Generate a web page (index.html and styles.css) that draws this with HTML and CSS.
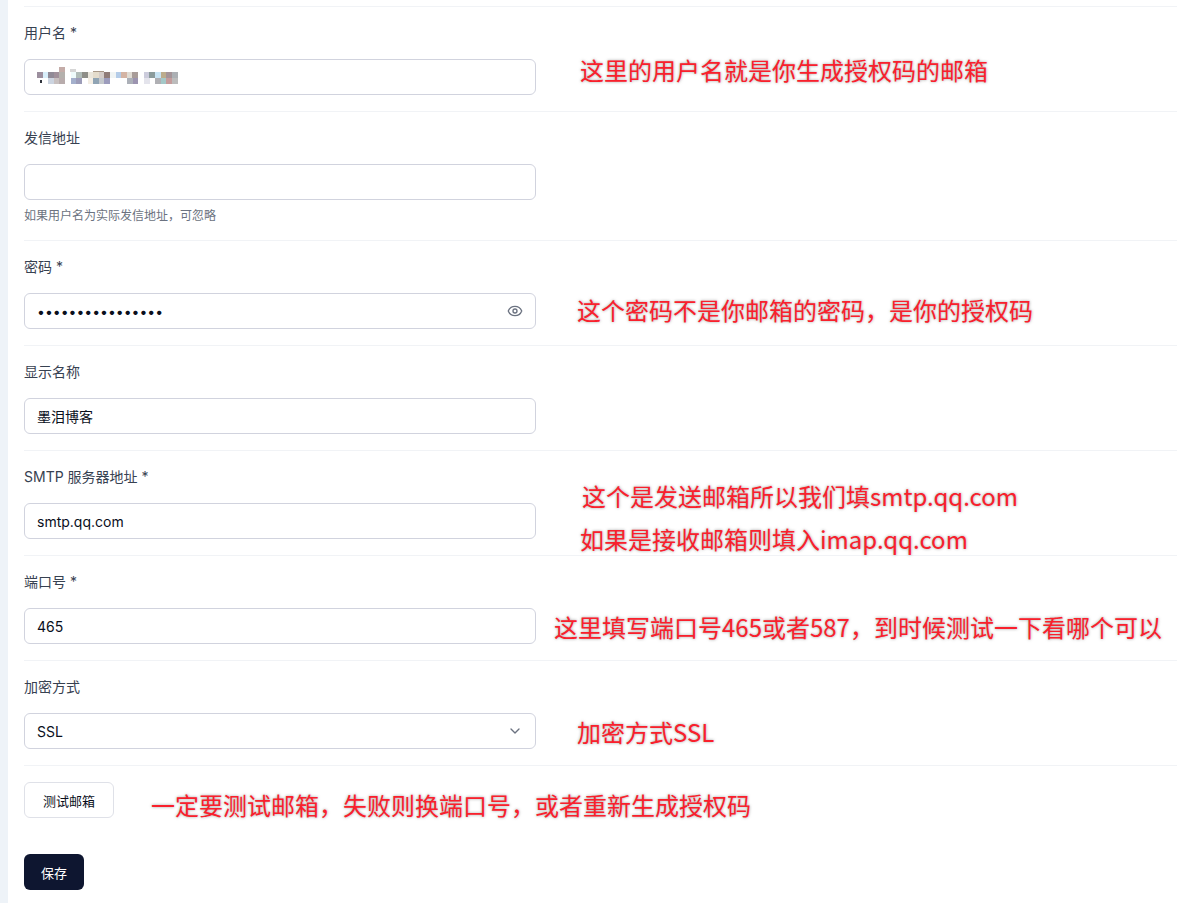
FILE: index.html
```html
<!DOCTYPE html>
<html lang="zh-CN">
<head>
<meta charset="utf-8">
<title>邮箱设置</title>
<link rel="stylesheet" href="styles.css">
</head>
<body>
<main class="panel">
  <form class="form">
    <div class="row">
      <label class="label">用户名 *</label>
      <div class="control">
        <input class="input" type="text" value="">
        <svg class="mosaic" width="150" height="20" viewBox="0 0 150 20" aria-hidden="true">
          <rect x="22" y="0" width="6" height="5" fill="#c4aca8"/><rect x="33" y="2" width="6" height="3" fill="#d6d6d6"/>
          <rect x="56" y="4" width="11" height="1" fill="#a89888"/>
          <rect x="0" y="5" width="6" height="6" fill="#9c8f9e"/><rect x="6" y="5" width="6" height="6" fill="#d8eefa"/><rect x="11" y="5" width="6" height="6" fill="#908a96"/><rect x="17" y="5" width="6" height="6" fill="#a0909a"/><rect x="22" y="5" width="6" height="6" fill="#b4b0ac"/>
          <rect x="34" y="5" width="6" height="6" fill="#eefbfb"/><rect x="39" y="5" width="6" height="6" fill="#b0bcb8"/><rect x="45" y="5" width="6" height="6" fill="#8e8e88"/><rect x="51" y="5" width="6" height="6" fill="#eae6dc"/><rect x="56" y="5" width="6" height="6" fill="#e4dccc"/><rect x="62" y="5" width="6" height="6" fill="#d4ccc8"/><rect x="67" y="5" width="6" height="6" fill="#907c78"/><rect x="73" y="5" width="6" height="6" fill="#f0f4f4"/><rect x="79" y="5" width="6" height="6" fill="#b4cce8"/><rect x="84" y="5" width="6" height="6" fill="#d4b4a4"/><rect x="90" y="5" width="6" height="6" fill="#e0dcd4"/><rect x="95" y="5" width="6" height="6" fill="#a89c98"/>
          <rect x="107" y="5" width="6" height="6" fill="#ccccdc"/><rect x="112" y="5" width="6" height="6" fill="#8c9c9c"/><rect x="118" y="5" width="6" height="6" fill="#c8e4f4"/><rect x="124" y="5" width="6" height="6" fill="#bcac8c"/><rect x="129" y="5" width="6" height="6" fill="#a49498"/><rect x="135" y="5" width="6" height="6" fill="#acb0b4"/>
          <rect x="3" y="13" width="2" height="3" fill="#30343c"/>
          <rect x="11" y="11" width="6" height="6" fill="#ccd4e0"/><rect x="17" y="11" width="6" height="6" fill="#c8c0c0"/><rect x="22" y="11" width="6" height="6" fill="#b8acac"/>
          <rect x="34" y="11" width="6" height="6" fill="#a4b0cc"/><rect x="39" y="11" width="6" height="6" fill="#9c9cb8"/><rect x="51" y="11" width="6" height="6" fill="#f4eee4"/><rect x="56" y="11" width="6" height="6" fill="#90a4b4"/><rect x="62" y="11" width="6" height="6" fill="#c4c8cc"/><rect x="67" y="11" width="6" height="6" fill="#9c9cbc"/>
          <rect x="95" y="11" width="6" height="6" fill="#9c94b0"/><rect x="90" y="11" width="6" height="6" fill="#acb0b8"/>
          <rect x="107" y="11" width="6" height="6" fill="#e4e4ec"/><rect x="118" y="11" width="6" height="6" fill="#b0b0b4"/><rect x="124" y="11" width="6" height="6" fill="#a4c8c8"/><rect x="129" y="11" width="6" height="6" fill="#c49c9c"/><rect x="135" y="11" width="6" height="6" fill="#bcbcbc"/>
        </svg>
      </div>
    </div>
    <div class="row">
      <label class="label">发信地址</label>
      <div class="control"><input class="input" type="text"></div>
      <p class="hint">如果用户名为实际发信地址，可忽略</p>
    </div>
    <div class="row">
      <label class="label">密码 *</label>
      <div class="control">
        <input class="input" type="password" value="aaaaaaaaaaaaaaaa">
        <svg class="trail-icon eye" width="16" height="16" viewBox="0 0 24 24" fill="none" stroke="currentColor" stroke-width="2" stroke-linecap="round" stroke-linejoin="round" aria-hidden="true">
          <path d="M2.06 12.35a1 1 0 0 1 0-.7 10.75 10.75 0 0 1 19.88 0 1 1 0 0 1 0 .7 10.75 10.75 0 0 1-19.88 0"/>
          <circle cx="12" cy="12" r="3"/>
        </svg>
      </div>
    </div>
    <div class="row">
      <label class="label">显示名称</label>
      <div class="control"><input class="input" type="text" value="墨泪博客"></div>
    </div>
    <div class="row">
      <label class="label">SMTP 服务器地址 *</label>
      <div class="control"><input class="input" type="text" value="smtp.qq.com"></div>
    </div>
    <div class="row">
      <label class="label">端口号 *</label>
      <div class="control"><input class="input" type="text" value="465"></div>
    </div>
    <div class="row">
      <label class="label">加密方式</label>
      <div class="control">
        <select class="input select"><option>SSL</option></select>
        <svg class="trail-icon chevron" width="16" height="16" viewBox="0 0 24 24" fill="none" stroke="currentColor" stroke-width="2" stroke-linecap="round" stroke-linejoin="round" aria-hidden="true">
          <path d="m6 9 6 6 6-6"/>
        </svg>
      </div>
    </div>
    <div class="row row-action">
      <button class="btn btn-outline" type="button">测试邮箱</button>
    </div>
    <div class="actions">
      <button class="btn btn-primary" type="button">保存</button>
    </div>
  </form>
  <p class="note note-user">这里的用户名就是你生成授权码的邮箱</p>
  <p class="note note-pass">这个密码不是你邮箱的密码，是你的授权码</p>
  <p class="note note-smtp">这个是发送邮箱所以我们填smtp.qq.com</p>
  <p class="note note-imap">如果是接收邮箱则填入imap.qq.com</p>
  <p class="note note-port">这里填写端口号465或者587，到时候测试一下看哪个可以</p>
  <p class="note note-ssl">加密方式SSL</p>
  <p class="note note-test">一定要测试邮箱，失败则换端口号，或者重新生成授权码</p>
</main>
</body>
</html>
```
FILE: styles.css
```css
* { box-sizing: border-box; }
html, body { height: 100%; }
body {
  margin: 0;
  overflow: hidden;
  background: #eef3f8;
  font-family: Inter, "Noto Sans CJK SC", sans-serif;
  font-size: 14px;
  color: #0a0f1c;
}
.panel {
  position: relative;
  margin-left: 8px;
  height: 903px;
  padding: 6px 0 0 16px;
  background: #fff;
}
.row {
  border-top: 1px solid #f1f3f6;
  padding: 16px 0;
}
.label {
  display: block;
  height: 20px;
  margin-bottom: 16px;
  line-height: 20px;
  color: #374151;
}
.control {
  position: relative;
  width: 512px;
}
.input {
  display: block;
  width: 100%;
  height: 36px;
  padding: 0 12px;
  border: 1px solid #d1d3de;
  border-radius: 6px;
  background: #fff;
  font: inherit;
  color: inherit;
  outline: none;
}
.select { appearance: none; -webkit-appearance: none; }
.mosaic {
  position: absolute;
  left: 13px;
  top: 8px;
}
.trail-icon {
  position: absolute;
  right: 13px;
  top: 10px;
  color: #6b7280;
}
.hint {
  margin: 8px 0 0;
  font-size: 12px;
  line-height: 16px;
  color: #6b7280;
}
.row-action { padding-bottom: 0; }
.actions { margin-top: 36px; }
.btn {
  display: block;
  height: 36px;
  border-radius: 6px;
  font: inherit;
  font-size: 13px;
  cursor: pointer;
}
.btn-outline {
  width: 90px;
  border: 1px solid #dfe1e8;
  background: #fff;
  color: #0a0f1c;
}
.btn-primary {
  width: 60px;
  border: 0;
  background: #0e1630;
  color: #fff;
}
.note {
  position: absolute;
  margin: 0;
  white-space: nowrap;
  font-family: "Noto Sans CJK SC", sans-serif;
  font-size: 24px;
  line-height: 32px;
  color: #f9202c;
  text-shadow: 0 0 3px rgba(120, 120, 120, .75), 0 0 1px #fff;
}
.note-user { left: 572px; top: 54px; }
.note-pass { left: 569px; top: 294px; }
.note-smtp { left: 574px; top: 480px; }
.note-imap { left: 572px; top: 523px; }
.note-port { left: 546px; top: 611px; }
.note-ssl  { left: 569px; top: 716px; }
.note-test { left: 143px; top: 789px; }
```
